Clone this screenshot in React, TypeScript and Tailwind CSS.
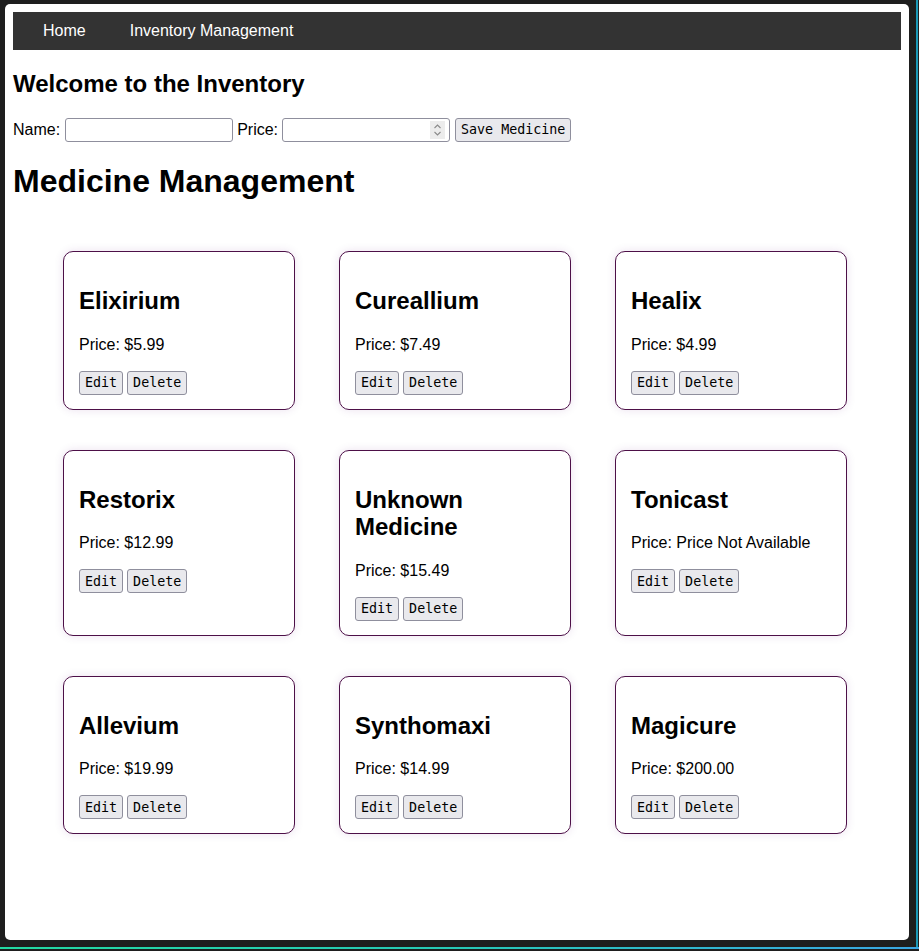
import { useState } from "react";

interface Medicine {
  name: string;
  price: string;
}

const medicines: Medicine[] = [
  { name: "Elixirium", price: "$5.99" },
  { name: "Cureallium", price: "$7.49" },
  { name: "Healix", price: "$4.99" },
  { name: "Restorix", price: "$12.99" },
  { name: "Unknown Medicine", price: "$15.49" },
  { name: "Tonicast", price: "Price Not Available" },
  { name: "Allevium", price: "$19.99" },
  { name: "Synthomaxi", price: "$14.99" },
  { name: "Magicure", price: "$200.00" },
];

const btn =
  "h-[24px] px-[5px] bg-[#e9e9ed] border border-[#8f8f9d] rounded-[3px] text-[13.33px] text-black font-['DejaVu_Sans_Mono',monospace] leading-none";

function MedicineCard({ name, price }: Medicine) {
  return (
    <div className="border border-[#4d1048] rounded-[10px] px-[15px] pt-[15px] pb-[14px] bg-white shadow-[0_0_10px_rgba(90,20,120,0.12)]">
      <h2 className="mt-[20px] mb-[21px] text-[24px] leading-[27.6px] font-bold">{name}</h2>
      <p className="mb-[17px] text-[16px] leading-[18px]">Price: {price}</p>
      <div className="flex gap-[4px]">
        <button className={btn}>Edit</button>
        <button className={btn}>Delete</button>
      </div>
    </div>
  );
}

export default function App() {
  const [name, setName] = useState("");
  const [price, setPrice] = useState("");

  return (
    <div className="w-[919px] h-[951px] bg-[#1e1e1e] flex flex-col font-['Liberation_Sans',Arial,sans-serif] text-black overflow-hidden">
      <div className="flex h-[947px]">
        <div className="pl-[5px] pt-[4px]">
          {/* white page panel */}
          <div className="w-[904px] h-[936px] bg-white rounded-[5px] px-[8px] pt-[8px]">
            <nav className="bg-[#333333] flex pl-[8px]">
              <a className="px-[22px] py-[10px] text-white text-[16px] leading-[18px]">Home</a>
              <a className="px-[22px] py-[10px] text-white text-[16px] leading-[18px]">Inventory Management</a>
            </nav>

            <h2 className="mt-[20px] mb-[20px] text-[24px] leading-[28px] font-bold">Welcome to the Inventory</h2>

            <form className="flex items-center text-[16px] h-[24px]" onSubmit={(e) => e.preventDefault()}>
              <label className="mr-[5px]">Name:</label>
              <input
                value={name}
                onChange={(e) => setName(e.target.value)}
                className="w-[168px] h-[24px] border border-[#8f8f9d] rounded-[3px] px-[4px] outline-none"
              />
              <label className="ml-[4px] mr-[4px]">Price:</label>
              <div className="w-[168px] h-[24px] border border-[#8f8f9d] rounded-[3px] flex items-center pr-[4px]">
                <input
                  value={price}
                  onChange={(e) => setPrice(e.target.value)}
                  className="flex-1 min-w-0 h-full px-[4px] outline-none bg-transparent"
                />
                <span className="w-[15px] h-[18px] bg-[#ececec] flex items-center justify-center">
                  <svg width="9" height="14" viewBox="0 0 9 14" fill="none" stroke="#8a8a8a" strokeWidth="1.1">
                    <path d="M1.5 5 L4.5 2 L7.5 5" />
                    <path d="M1.5 9 L4.5 12 L7.5 9" />
                  </svg>
                </span>
              </div>
              <button type="submit" className={btn + " ml-[5px]"}>Save Medicine</button>
            </form>

            <h1 className="mt-[21px] text-[32px] leading-[37px] font-bold">Medicine Management</h1>

            <div className="grid grid-cols-[repeat(3,232px)] gap-x-[44px] gap-y-[40px] pl-[50px] pt-[51px]">
              {medicines.map((m) => (
                <MedicineCard key={m.name} {...m} />
              ))}
            </div>
          </div>
        </div>
        <div className="w-[7px]" />
        <div className="w-[2px] bg-[#1c9ab8]" />
      </div>
      <div className="h-[2px] bg-gradient-to-r from-[#23d9a2] via-[#27c8b6] to-[#3aa6e3]" />
    </div>
  );
}
